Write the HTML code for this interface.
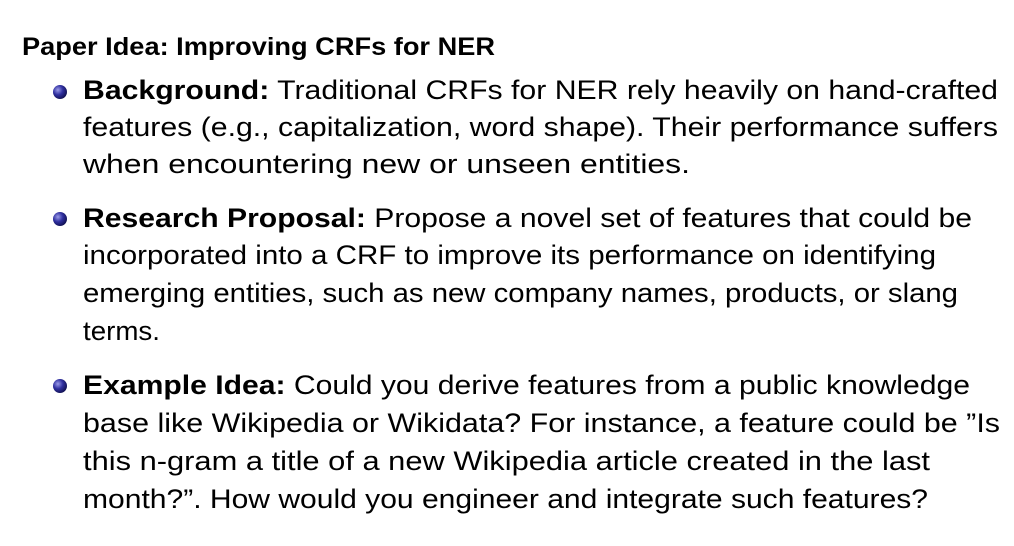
<!DOCTYPE html>
<html><head><meta charset="utf-8"><style>
html,body{margin:0;padding:0;background:#fff;width:1014px;height:546px;overflow:hidden}
svg text{font-family:"Liberation Sans",sans-serif;fill:#000}
</style></head><body>
<svg width="1014" height="546" xmlns="http://www.w3.org/2000/svg">
<defs><radialGradient id="b" cx="0.35" cy="0.35" r="0.7"><stop offset="0" stop-color="#9a9ae8"/><stop offset="0.5" stop-color="#3030a0"/><stop offset="1" stop-color="#101050"/></radialGradient></defs>
<text x="22" y="55" font-size="25" font-weight="bold" textLength="473" lengthAdjust="spacingAndGlyphs">Paper Idea: Improving CRFs for NER</text>
<circle cx="60" cy="92" r="7" fill="url(#b)"/>
<circle cx="60" cy="219" r="7" fill="url(#b)"/>
<circle cx="60" cy="386" r="7" fill="url(#b)"/>
<g font-size="27">
<text x="83" y="99" textLength="915" lengthAdjust="spacingAndGlyphs"><tspan font-weight="bold">Background:</tspan> Traditional CRFs for NER rely heavily on hand-crafted</text>
<text x="83" y="136" textLength="915" lengthAdjust="spacingAndGlyphs">features (e.g., capitalization, word shape). Their performance suffers</text>
<text x="83" y="173" textLength="607" lengthAdjust="spacingAndGlyphs">when encountering new or unseen entities.</text>
<text x="83" y="227" textLength="889" lengthAdjust="spacingAndGlyphs"><tspan font-weight="bold">Research Proposal:</tspan> Propose a novel set of features that could be</text>
<text x="83" y="264" textLength="853" lengthAdjust="spacingAndGlyphs">incorporated into a CRF to improve its performance on identifying</text>
<text x="83" y="302" textLength="875" lengthAdjust="spacingAndGlyphs">emerging entities, such as new company names, products, or slang</text>
<text x="83" y="340" textLength="77" lengthAdjust="spacingAndGlyphs">terms.</text>
<text x="83" y="394" textLength="887" lengthAdjust="spacingAndGlyphs"><tspan font-weight="bold">Example Idea:</tspan> Could you derive features from a public knowledge</text>
<text x="83" y="432" textLength="917" lengthAdjust="spacingAndGlyphs">base like Wikipedia or Wikidata? For instance, a feature could be ”Is</text>
<text x="83" y="470" textLength="847" lengthAdjust="spacingAndGlyphs">this n-gram a title of a new Wikipedia article created in the last</text>
<text x="83" y="508" textLength="845" lengthAdjust="spacingAndGlyphs">month?”. How would you engineer and integrate such features?</text>
</g>
</svg>
</body></html>
